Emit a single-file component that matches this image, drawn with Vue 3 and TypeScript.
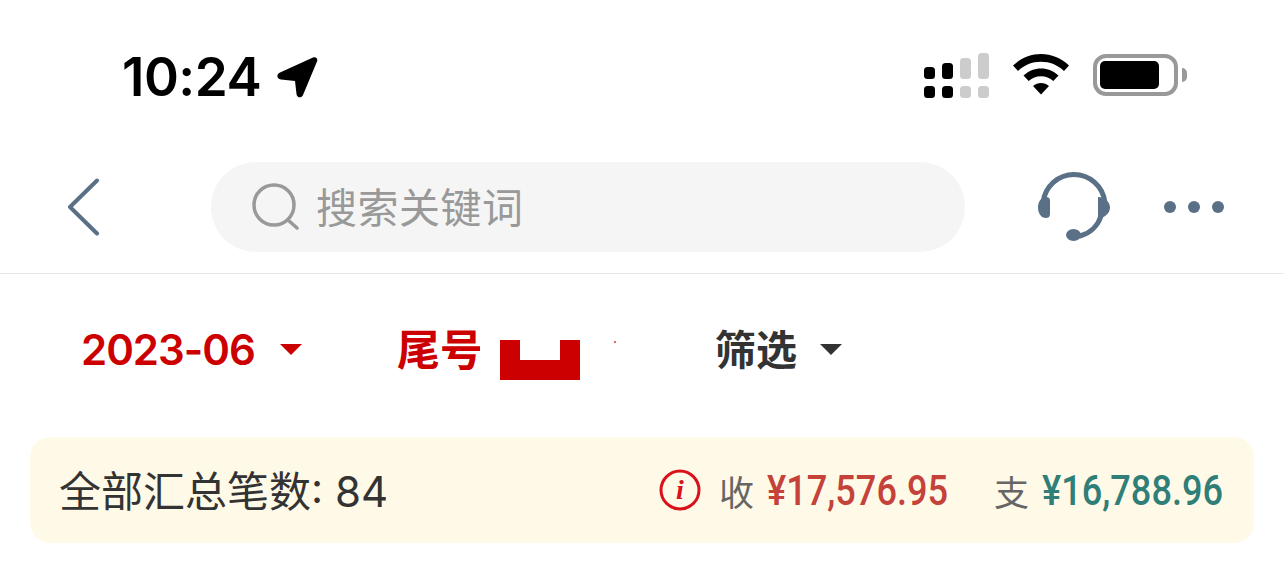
<template>
  <div class="page">
    <div class="status-bar">
      <div class="status-left">
        <span class="time">10:24</span>
        <svg class="location" width="41" height="41" viewBox="0 0 41 41">
          <path d="M36 .5c3.500-1 5 1.500 4 4L26 38c-1.500 3.500-6 3-6.500-1L18 24 4 22.500c-4.500-.5-4.800-5.500-1-7z" fill="#000" />
        </svg>
      </div>
      <div class="status-right">
        <svg width="66" height="46" viewBox="0 0 66 46">
          <rect x="0" y="14" width="11" height="12" rx="3.500" fill="#000" />
          <rect x="0" y="33" width="11" height="12" rx="3.500" fill="#000" />
          <rect x="18" y="10" width="11" height="16" rx="3.500" fill="#000" />
          <rect x="18" y="33" width="11" height="12" rx="3.500" fill="#000" />
          <rect x="36" y="5" width="11" height="21" rx="3.500" fill="#ccc" />
          <rect x="36" y="33" width="11" height="12" rx="3.500" fill="#ccc" />
          <rect x="54" y="0" width="11" height="26" rx="3.500" fill="#ccc" />
          <rect x="54" y="33" width="11" height="12" rx="3.500" fill="#ccc" />
        </svg>
        <svg class="wifi" width="58" height="44" viewBox="0 0 58 44">
          <path d="M29 2c10.500 0 20 4 28 11.500l-5 5.500C45.500 13 38 9.800 29 9.800S12.500 13 6 19L1 13.500C9 6 18.500 2 29 2z" fill="#000" />
          <path d="M29 16.500c6.500 0 12.500 2.500 17.500 7l-5.200 5.500c-3.500-3-7.500-4.800-12.300-4.800s-8.800 1.800-12.300 4.800l-5.200-5.500c5-4.500 11-7 17.500-7z" fill="#000" />
          <path d="M29 31c3 0 5.700 1 8 3l-8 8.500-8-8.500c2.300-2 5-3 8-3z" fill="#000" />
        </svg>
        <div class="battery">
          <div class="battery-body"><div class="battery-level"></div></div>
          <div class="battery-cap"></div>
        </div>
      </div>
    </div>

    <div class="nav-bar">
      <svg class="back" width="34" height="58" viewBox="0 0 34 58">
        <path d="M30 2.500 3 29l27 26.500" fill="none" stroke="#5a7087" stroke-width="4" stroke-linecap="round" stroke-linejoin="round" />
      </svg>
      <div class="search">
        <svg width="48" height="48" viewBox="0 0 48 48">
          <circle cx="22" cy="22" r="20" fill="none" stroke="#999" stroke-width="3.500" />
          <path d="m36 37 9 8" fill="none" stroke="#999" stroke-width="3.500" stroke-linecap="round" />
        </svg>
        <span class="placeholder">搜索关键词</span>
      </div>
      <svg class="headset" width="72" height="70" viewBox="0 0 72 70">
        <path d="M5.200 30A31 31 0 0 1 66.800 30M63 44A30 30 0 0 1 42 64" fill="none" stroke="#5a7087" stroke-width="5" stroke-linecap="round" />
        <path d="M8 25c3 0 4 1.500 4 4v13c0 3-2 4-4 4-5 0-8-5-8-10.500S3 25 8 25zM60 25c7 0 12 5 12 10.500S67 46 60 46z" fill="#5a7087" />
        <ellipse cx="35.500" cy="63" rx="7.500" ry="6" fill="#5a7087" />
      </svg>
      <div class="dots"><i></i><i></i><i></i></div>
    </div>

    <div class="filters">
      <div class="filter active date">
        <span class="date-text">2023-06</span>
        <span class="arrow"></span>
      </div>
      <div class="filter tail">
        <span class="tail-label">尾号</span>
        <svg class="mask" width="80" height="40" viewBox="0 0 80 40">
          <path d="M0 0h20v20h40V0h20v40H0z" fill="#cc0000" />
        </svg>
        <i class="speck"></i>
      </div>
      <div class="filter screen">
        <span class="screen-label">筛选</span>
        <span class="arrow"></span>
      </div>
    </div>

    <div class="summary">
      <div class="count">全部汇总笔数: 84</div>
      <div class="totals">
        <svg class="info" width="42" height="42" viewBox="0 0 42 42">
          <circle cx="21" cy="21" r="19" fill="none" stroke="#d9111b" stroke-width="3" />
          <text x="21" y="30" text-anchor="middle" class="info-i">i</text>
        </svg>
        <span class="label in-label">收</span>
        <span class="amount income"><span>¥17,576.95</span></span>
        <span class="label out-label">支</span>
        <span class="amount expense"><span>¥16,788.96</span></span>
      </div>
    </div>
  </div>
</template>

<script setup lang="ts">
</script>

<style>
html,
body {
  margin: 0;
  background: #fff;
}
</style>

<style scoped>
.page {
  width: 1284px;
  height: 568px;
  overflow: hidden;
  background: #fff;
  font-family: "Noto Sans CJK SC", sans-serif;
}

.status-bar {
  height: 150px;
  padding: 0 97px 0 122px;
  box-sizing: border-box;
  display: flex;
  justify-content: space-between;
  align-items: flex-start;
}

.status-left {
  display: flex;
  align-items: center;
  gap: 16px;
  padding-top: 48px;
}

.time {
  font-family: Inter, sans-serif;
  font-size: 53px;
  font-weight: 600;
  line-height: 58px;
  color: #000;
  letter-spacing: -0.5px;
}

.status-right {
  display: flex;
  align-items: flex-start;
  gap: 22px;
  padding-top: 53px;
}

.wifi {
  margin-top: -1px;
}

.battery {
  display: flex;
  align-items: center;
  gap: 4px;
  margin: 1px 0 0 1px;
}

.battery-body {
  width: 85px;
  height: 42px;
  box-sizing: border-box;
  border: 4px solid #999;
  border-radius: 13px;
  padding: 3px;
}

.battery-level {
  width: 59px;
  height: 28px;
  background: #000;
  border-radius: 5px;
}

.battery-cap {
  width: 5px;
  height: 14px;
  background: #999;
  border-radius: 0 7px 7px 0;
}

.nav-bar {
  height: 124px;
  box-sizing: border-box;
  border-bottom: 1px solid #e8e8e8;
  padding: 12px 0 21px 67px;
  display: flex;
  align-items: center;
}

.search {
  width: 754px;
  height: 90px;
  margin-left: 110px;
  padding-left: 41px;
  box-sizing: border-box;
  background: #f5f5f5;
  border-radius: 45px;
  display: flex;
  align-items: center;
  gap: 16px;
}

.placeholder {
  font-size: 41px;
  color: #999;
  letter-spacing: 0.5px;
  margin-bottom: 4px;
}

.headset {
  margin-left: 73px;
}

.dots {
  display: flex;
  gap: 12px;
  margin-left: 54px;
}

.dots i {
  width: 12px;
  height: 12px;
  border-radius: 50%;
  background: #5a7087;
}

.filters {
  height: 163px;
  display: flex;
  align-items: flex-start;
  padding: 45px 0 0 81px;
  box-sizing: border-box;
  font-size: 41px;
  font-weight: 700;
  color: #333;
}

.filter {
  display: flex;
  align-items: center;
  height: 60px;
}

.active {
  color: #cc0000;
}

.date-text {
  width: 176px;
  font-family: Inter, sans-serif;
  font-size: 42px;
  font-weight: 600;
  letter-spacing: -1px;
  white-space: nowrap;
}

.arrow {
  width: 0;
  height: 0;
  margin-left: 23px;
  border-left: 11px solid transparent;
  border-right: 11px solid transparent;
  border-top: 11px solid currentColor;
}

.tail {
  margin-left: 95px;
  color: #cc0000;
  align-items: flex-start;
}

.tail-label {
  width: 83px;
  overflow: hidden;
  white-space: nowrap;
  font-size: 43px;
  line-height: 56px;
}

.mask {
  margin: 21px 0 0 20px;
}

.speck {
  width: 2px;
  height: 2px;
  margin: 22px 0 0 34px;
  background: #e8696d;
}

.screen {
  margin-left: 99px;
}

.screen-label {
  margin-bottom: 4px;
}

.summary {
  height: 106px;
  margin: 0 30px;
  padding: 0 31px;
  box-sizing: border-box;
  background: #fffae8;
  border-radius: 20px;
  display: flex;
  align-items: center;
  justify-content: space-between;
}

.count {
  font-family: Inter, "Noto Sans CJK SC", sans-serif;
  font-size: 42px;
  color: #333;
  margin: 0 0 4px -2px;
}

.totals {
  display: flex;
  align-items: center;
}

.info-i {
  font-family: "Liberation Serif", serif;
  font-size: 28px;
  font-weight: 700;
  font-style: italic;
  fill: #d9111b;
}

.label {
  font-size: 35px;
  color: #666;
}

.in-label {
  margin-left: 18px;
}

.out-label {
  margin-left: 46px;
}

.amount {
  width: 181px;
  margin-left: 13px;
  font-family: Roboto, sans-serif;
  font-size: 43px;
  font-weight: 500;
  white-space: nowrap;
}

.amount span {
  display: inline-block;
  transform: scaleX(0.84);
  transform-origin: left center;
}

.income {
  color: #c4423a;
}

.expense {
  color: #2f7f78;
}
</style>
